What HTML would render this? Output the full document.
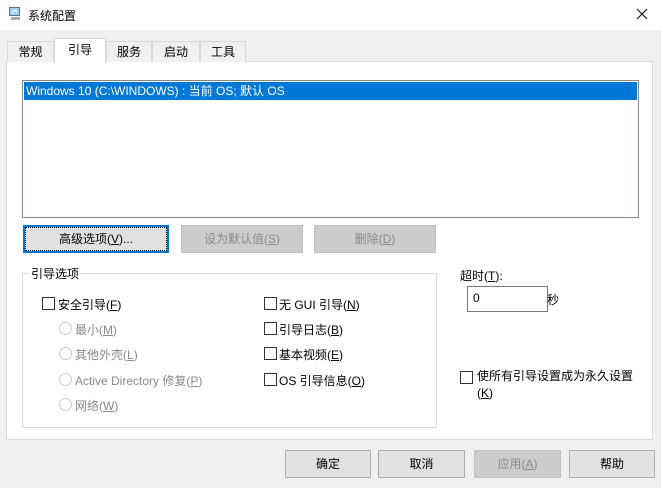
<!DOCTYPE html>
<html><head><meta charset="utf-8"><style>
*{box-sizing:border-box;margin:0;padding:0}
body{width:661px;height:488px;background:#f0f0f0;font-family:"Liberation Sans","Noto Sans CJK SC",sans-serif;font-size:12px;color:#000;position:relative;overflow:hidden}
.a{position:absolute;white-space:nowrap}
.btn{position:absolute;height:28px;background:#e1e1e1;border:1px solid #adadad;text-align:center;line-height:26px}
.dis{background:#cccccc;border-color:#bfbfbf;color:#8a8a8a}
.cb{position:absolute;width:13px;height:13px;border:1px solid #333;background:#fff}
.rb{position:absolute;width:13px;height:13px;border:1px solid #ccc;border-radius:50%;background:#fff}
.g{color:#8a8a8a}
.tab{position:absolute;top:41px;height:21px;border:1px solid #d9d9d9;border-bottom:none;background:#f0f0f0;text-align:center;line-height:20px}
</style></head><body>
<div class="a" style="left:0;top:0;width:661px;height:30px;background:#fff"></div>
<svg class="a" style="left:7px;top:6px" width="16" height="16" viewBox="0 0 16 16"><rect x="2" y="1" width="11" height="9" fill="#5b6a9a"/><rect x="3" y="2" width="9" height="7" fill="#9fd0f5"/><path d="M5 7 L8 4 L10 6" stroke="#fff" fill="none"/><rect x="4" y="11" width="9" height="3" fill="#aaa"/></svg>
<div class="a" style="left:28px;top:7px">系统配置</div>
<svg class="a" style="left:636px;top:8px" width="12" height="12" viewBox="0 0 12 12"><path d="M1 1L11 11M11 1L1 11" stroke="#000" stroke-width="1"/></svg>
<div class="a" style="left:6px;top:61px;width:647px;height:379px;background:#fff;border:1px solid #d9d9d9"></div>
<div class="tab" style="left:7px;width:47px">常规</div>
<div class="tab" style="left:54px;top:38px;height:25px;width:52px;background:#fff;z-index:2;line-height:22px">引导</div>
<div class="tab" style="left:106px;width:46px">服务</div>
<div class="tab" style="left:152px;width:48px">启动</div>
<div class="tab" style="left:200px;width:46px">工具</div>
<div class="a" style="left:22px;top:80px;width:617px;height:138px;border:1px solid #828790;background:#fff"></div>
<div class="a" style="left:24px;top:82px;width:613px;height:18px;background:#0078d7;color:#fff;padding-left:2px;line-height:18px">Windows 10 (C:\WINDOWS) : 当前 OS; 默认 OS</div>
<div class="btn" style="left:23px;top:225px;width:146px;border:2px solid #0078d7;line-height:24px"><span style="outline:1px dotted #000;outline-offset:2px;display:inline-block;width:136px;line-height:18px">高级选项(<u>V</u>)...</span></div>
<div class="btn dis" style="left:181px;top:225px;width:122px">设为默认值(<u>S</u>)</div>
<div class="btn dis" style="left:314px;top:225px;width:122px">删除(<u>D</u>)</div>
<div class="a" style="left:22px;top:273px;width:415px;height:155px;border:1px solid #dcdcdc"></div>
<div class="a" style="left:29px;top:265px;background:#fff;padding:0 2px">引导选项</div>
<div class="cb" style="left:42px;top:297px"></div><div class="a" style="left:58px;top:296px">安全引导(<u>F</u>)</div>
<div class="rb" style="left:59px;top:322px"></div><div class="a g" style="left:75px;top:321px">最小(<u>M</u>)</div>
<div class="rb" style="left:59px;top:347px"></div><div class="a g" style="left:75px;top:346px">其他外壳(<u>L</u>)</div>
<div class="rb" style="left:59px;top:373px"></div><div class="a g" style="left:75px;top:372px">Active Directory 修复(<u>P</u>)</div>
<div class="rb" style="left:59px;top:398px"></div><div class="a g" style="left:75px;top:397px">网络(<u>W</u>)</div>
<div class="cb" style="left:264px;top:297px"></div><div class="a" style="left:279px;top:296px">无 GUI 引导(<u>N</u>)</div>
<div class="cb" style="left:264px;top:322px"></div><div class="a" style="left:279px;top:321px">引导日志(<u>B</u>)</div>
<div class="cb" style="left:264px;top:347px"></div><div class="a" style="left:279px;top:346px">基本视频(<u>E</u>)</div>
<div class="cb" style="left:264px;top:373px"></div><div class="a" style="left:279px;top:372px">OS 引导信息(<u>O</u>)</div>
<div class="a" style="left:460px;top:267px">超时(<u>T</u>):</div>
<div class="a" style="left:467px;top:286px;width:81px;height:26px;border:1px solid #7a7a7a;background:#fff;padding:4px 5px">0</div>
<div class="a" style="left:547px;top:291px">秒</div>
<div class="cb" style="left:460px;top:371px"></div>
<div class="a" style="left:477px;top:368px;line-height:17px">使所有引导设置成为永久设置<br>(<u>K</u>)</div>
<div class="btn" style="left:285px;top:450px;width:86px">确定</div>
<div class="btn" style="left:378px;top:450px;width:87px">取消</div>
<div class="btn dis" style="left:474px;top:450px;width:87px">应用(<u>A</u>)</div>
<div class="btn" style="left:569px;top:450px;width:86px">帮助</div>
</body></html>
